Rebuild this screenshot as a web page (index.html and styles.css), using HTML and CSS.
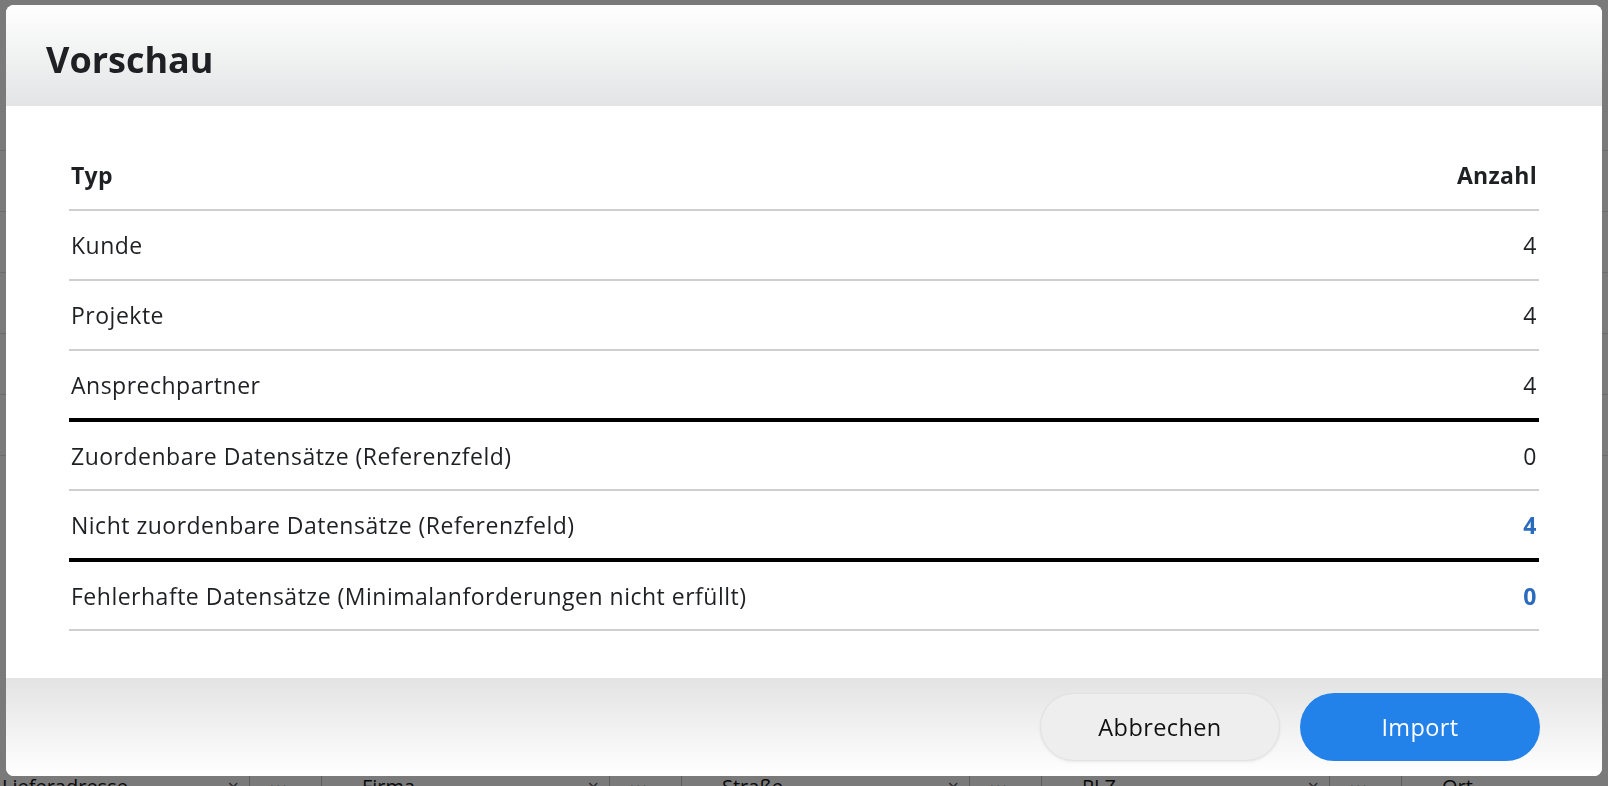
FILE: index.html
```html
<!DOCTYPE html>
<html lang="de">
<head>
<meta charset="utf-8">
<title>Vorschau</title>
<link rel="stylesheet" href="styles.css">
</head>
<body>
<div class="page">
  <div class="page-lines">
    <div class="pl"></div><div class="pl"></div><div class="pl"></div><div class="pl"></div><div class="pl"></div><div class="pl"></div>
  </div>
  <div class="fields">
    <div class="field"><span class="f-label">Lieferadresse</span><span class="f-x">×</span></div><div class="f-more">• • •</div>
    <div class="field"><span class="f-label">Firma</span><span class="f-x">×</span></div><div class="f-more">• • •</div>
    <div class="field"><span class="f-label">Straße</span><span class="f-x">×</span></div><div class="f-more">• • •</div>
    <div class="field"><span class="f-label">PLZ</span><span class="f-x">×</span></div><div class="f-more">• • •</div>
    <div class="field"><span class="f-label">Ort</span><span class="f-x">×</span></div>
  </div>
</div>
<div class="overlay">
  <div class="modal">
    <header class="modal-head"><h1>Vorschau</h1></header>
    <main class="modal-body">
      <table class="preview">
        <thead>
          <tr><th class="c-type">Typ</th><th class="c-num">Anzahl</th></tr>
        </thead>
        <tbody>
          <tr><td>Kunde</td><td class="c-num">4</td></tr>
          <tr><td>Projekte</td><td class="c-num">4</td></tr>
          <tr class="sep"><td>Ansprechpartner</td><td class="c-num">4</td></tr>
          <tr><td>Zuordenbare Datensätze (Referenzfeld)</td><td class="c-num">0</td></tr>
          <tr class="sep"><td>Nicht zuordenbare Datensätze (Referenzfeld)</td><td class="c-num link">4</td></tr>
          <tr><td>Fehlerhafte Datensätze (Minimalanforderungen nicht erfüllt)</td><td class="c-num link">0</td></tr>
        </tbody>
      </table>
    </main>
    <footer class="modal-foot">
      <button class="btn btn-cancel">Abbrechen</button>
      <button class="btn btn-primary">Import</button>
    </footer>
  </div>
</div>
</body>
</html>
```
FILE: styles.css
```css
* { box-sizing: border-box; }
html, body { margin: 0; height: 100%; }
body {
  font-family: "Open Sans", "Lato", "Liberation Sans", sans-serif;
  background: #f4f4f4;
  color: #1f2023;
  overflow: hidden;
}
.page {
  height: 786px;
  display: flex;
  flex-direction: column;
  justify-content: space-between;
  padding-top: 150px;
}
.page-lines { display: flex; flex-direction: column; gap: 60px; }
.pl { height: 1px; background: #d8d8d8; }
.fields {
  display: flex;
  align-items: center;
  height: 30px;
  margin-bottom: -16px;
  font-size: 20px;
  line-height: 30px;
  color: #111;
}
.field {
  width: 250px;
  display: flex;
  justify-content: space-between;
  padding: 0 10px 0 2px;
  border-right: 1px solid #bbb;
  flex: none;
}
.f-more {
  width: 72px;
  padding-left: 20px;
  border-right: 1px solid #bbb;
  color: #777;
  font-size: 10px;
  flex: none;
  margin-right: 38px;
}
.f-x { color: #555; }

.overlay {
  position: fixed;
  inset: 0;
  background: rgba(0, 0, 0, 0.5);
  padding: 5px 6px 10px 6px;
}
.modal {
  height: 100%;
  background: #fff;
  border-radius: 8px;
  overflow: hidden;
  display: flex;
  flex-direction: column;
}
.modal-head {
  height: 101px;
  flex: none;
  background: linear-gradient(#ffffff, #e3e4e5);
  padding: 8px 40px 0 40px;
  display: flex;
  align-items: center;
}
.modal-head h1 {
  margin: 0;
  font-size: 36px;
  font-weight: 700;
  color: #1f2023;
  letter-spacing: 0;
}
.modal-body {
  flex: 1;
  padding: 34px 63px 0 63px;
}
.preview {
  width: 100%;
  border-collapse: collapse;
  font-size: 23px;
  letter-spacing: 0.5px;
}
.preview th, .preview td {
  height: 70px;
  padding: 0 2px;
  text-align: left;
  vertical-align: middle;
}
.preview th { font-weight: 700; letter-spacing: 0.3px; }
.preview tr { border-bottom: 2px solid #cfcfcf; }
.preview tr.sep { border-bottom: 4px solid #000; }
.preview .c-num { text-align: right; }
.preview .link { color: #2a6bbd; font-weight: 700; }

.modal-foot {
  height: 98px;
  flex: none;
  background: linear-gradient(#e3e3e3, #ffffff);
  display: flex;
  justify-content: flex-end;
  align-items: center;
  gap: 20px;
  padding: 0 62px 0 0;
}
.btn {
  width: 240px;
  height: 68px;
  border-radius: 34px;
  font-family: inherit;
  font-size: 23.5px;
  letter-spacing: 0.4px;
  cursor: pointer;
}
.btn-cancel {
  background: #eeeeee;
  border: 1px solid #e2e2e2;
  color: #111;
  box-shadow: 0 1px 3px rgba(0,0,0,0.08);
}
.btn-primary {
  background: #2382e9;
  border: none;
  color: #fff;
}
```
